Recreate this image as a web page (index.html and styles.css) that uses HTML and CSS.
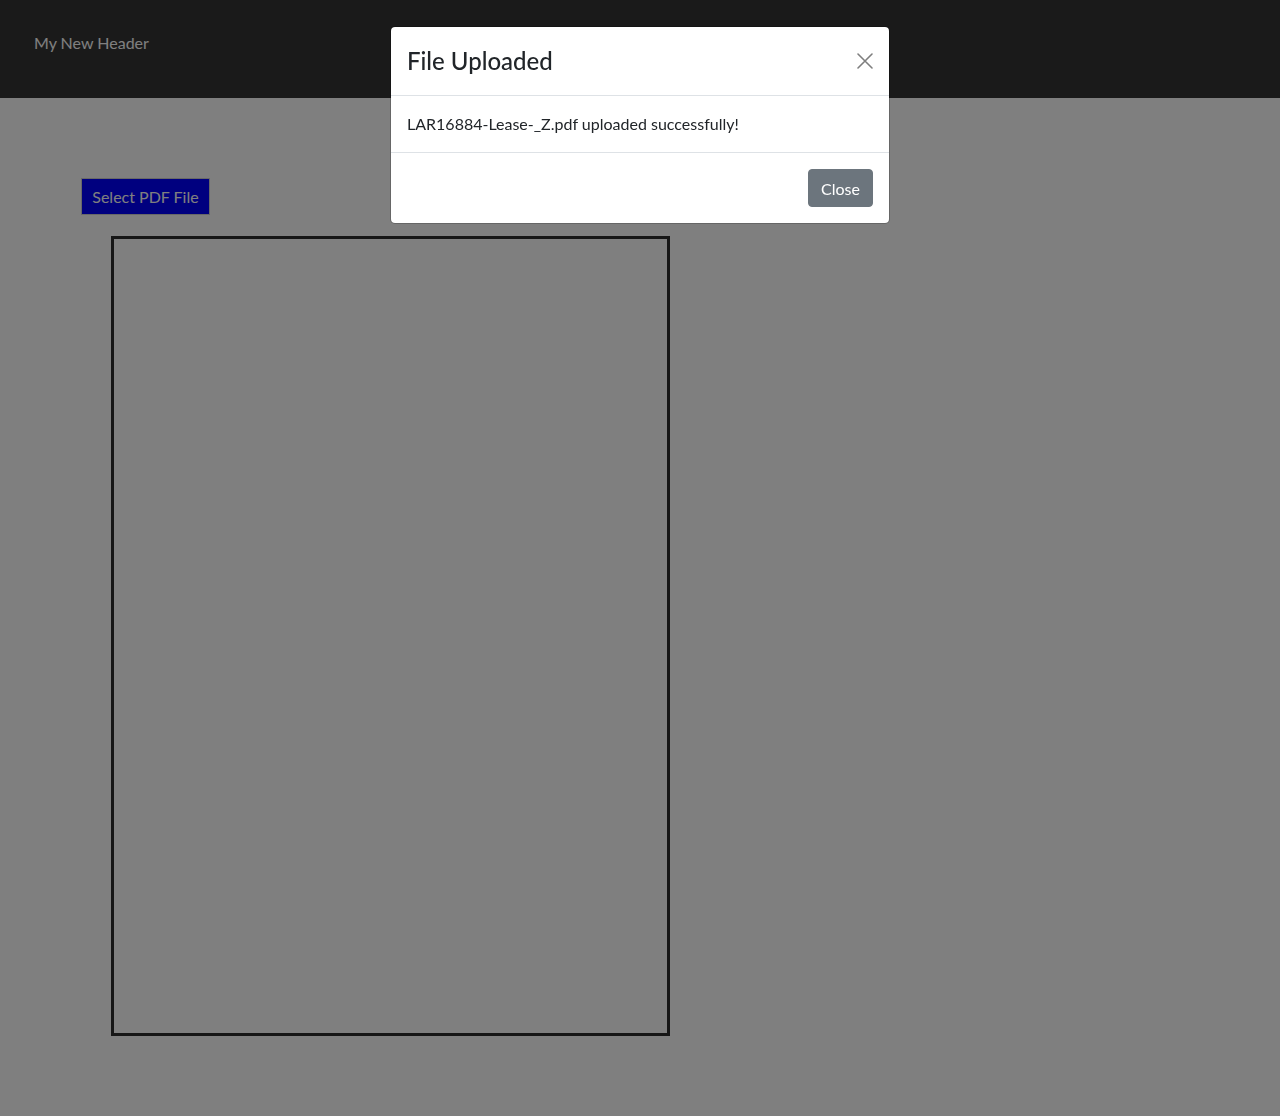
FILE: index.html
```html
<!DOCTYPE html>
<html lang="en">
<head>
<meta charset="utf-8">
<title>PDF Upload</title>
<link rel="stylesheet" href="styles.css">
</head>
<body>
<header class="topbar">
  <span class="brand">My New Header</span>
</header>
<main class="content">
  <button class="select-btn" type="button">Select PDF File</button>
  <div class="pdf-frame"></div>
</main>

<div class="backdrop"></div>
<div class="modal">
  <div class="modal-dialog">
    <div class="modal-header">
      <h4 class="modal-title">File Uploaded</h4>
      <button class="btn-close" type="button" aria-label="Close">
        <svg viewBox="0 0 16 16" width="16" height="16"><path d="M1 1L15 15M15 1L1 15" stroke="#000" stroke-width="1.6" stroke-linecap="round" fill="none"/></svg>
      </button>
    </div>
    <div class="modal-body">LAR16884-Lease-_Z.pdf uploaded successfully!</div>
    <div class="modal-footer">
      <button class="btn-secondary" type="button">Close</button>
    </div>
  </div>
</div>
</body>
</html>
```

FILE: styles.css
```css
* { box-sizing: border-box; }
html, body { margin: 0; padding: 0; }
body {
  font-family: "Lato", "Open Sans", sans-serif;
  font-size: 16px;
  line-height: 1.5;
  color: #212529;
  background: #ffffff;
  height: 1116px;
  overflow: hidden;
}
.topbar {
  height: 98px;
  background: #343434;
  padding: 31px 0 0 34px;
}
.brand {
  color: #ffffff;
  font-size: 16px;
  line-height: 24px;
}
.content {
  padding: 80px 0 0 81px;
  display: flex;
  flex-direction: column;
  align-items: flex-start;
}
.select-btn {
  font-family: inherit;
  font-size: 16px;
  height: 37px;
  width: 129px;
  padding: 0;
  background: #0000ff;
  color: #ffffff;
  border: 1px solid #d0d0d0;
  border-radius: 0;
}
.pdf-frame {
  margin: 21px 0 0 30px;
  width: 559px;
  height: 800px;
  border: 3px solid #2c2c2c;
}
.backdrop {
  position: fixed;
  inset: 0;
  background: rgba(0, 0, 0, 0.5);
}
.modal {
  position: fixed;
  inset: 0;
  display: flex;
  justify-content: center;
  align-items: flex-start;
}
.modal-dialog {
  margin-top: 26px;
  width: 500px;
  background: #ffffff;
  border: 1px solid rgba(0, 0, 0, 0.2);
  border-radius: 5px;
  background-clip: padding-box;
}
.modal-header {
  display: flex;
  align-items: center;
  justify-content: space-between;
  padding: 16px;
  border-bottom: 1px solid #dee2e6;
}
.modal-title {
  margin: 0;
  font-size: 24px;
  font-weight: 500;
  line-height: 36px;
  color: #212529;
}
.btn-close {
  width: 24px;
  height: 24px;
  padding: 4px;
  margin: -8px -4px -8px auto;
  border: 0;
  background: transparent;
  opacity: 0.5;
  display: flex;
  align-items: center;
  justify-content: center;
}
.btn-close svg { display: block; }
.modal-body {
  padding: 16px;
  font-size: 16px;
  line-height: 24px;
}
.modal-footer {
  display: flex;
  justify-content: flex-end;
  padding: 16px;
  border-top: 1px solid #dee2e6;
}
.btn-secondary {
  font-family: inherit;
  font-size: 16px;
  height: 38px;
  padding: 0 12px;
  background: #6c757d;
  color: #ffffff;
  border: 1px solid #6c757d;
  border-radius: 4px;
}
```
